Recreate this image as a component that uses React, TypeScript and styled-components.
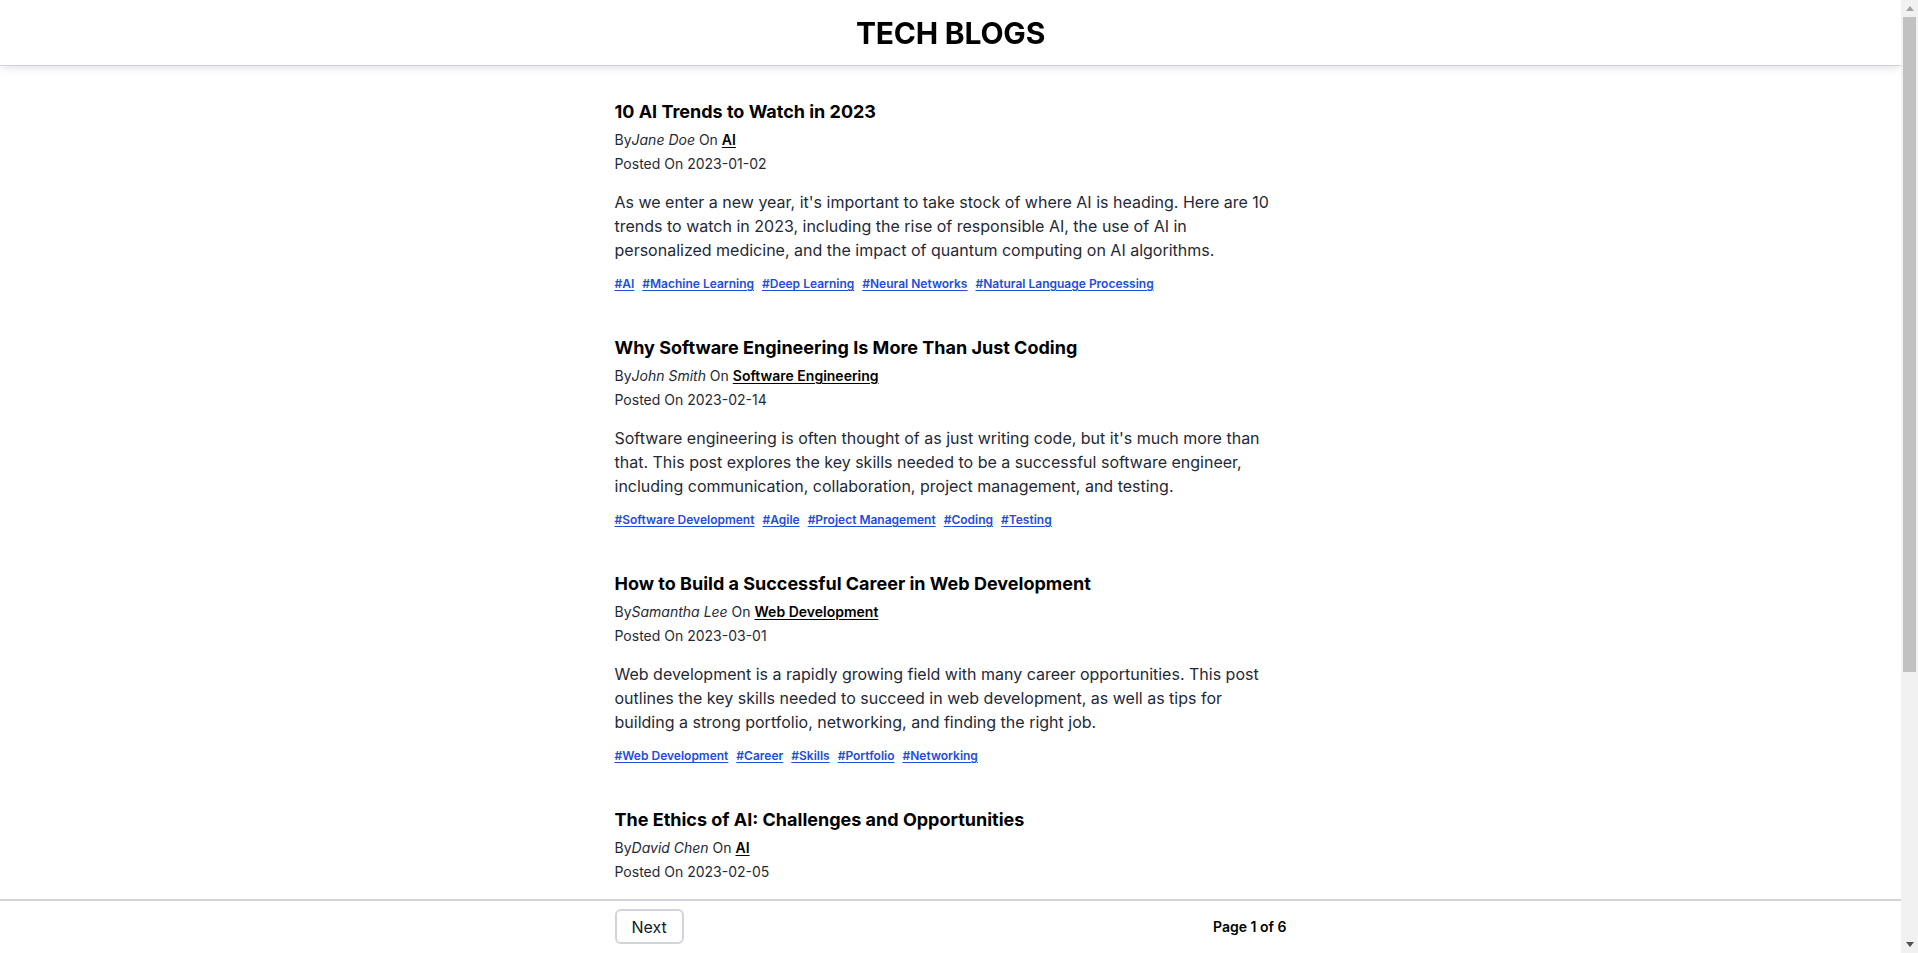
import React from "react";
import styled, { createGlobalStyle } from "styled-components";

const GlobalStyle = createGlobalStyle`
  html, body { margin: 0; padding: 0; background: #ffffff; overflow: hidden; }
  body {
    font-family: Inter, "Noto Sans", "Liberation Sans", sans-serif;
    color: #111827;
    -webkit-font-smoothing: antialiased;
  }
  * { box-sizing: border-box; }
`;

type Post = {
  title: string;
  author: string;
  category: string;
  date: string;
  body: string;
  tags: string[];
};

const posts: Post[] = [
  {
    title: "10 AI Trends to Watch in 2023",
    author: "Jane Doe",
    category: "AI",
    date: "2023-01-02",
    body:
      "As we enter a new year, it's important to take stock of where AI is heading. Here are 10 trends to watch in 2023, including the rise of responsible AI, the use of AI in personalized medicine, and the impact of quantum computing on AI algorithms.",
    tags: ["AI", "Machine Learning", "Deep Learning", "Neural Networks", "Natural Language Processing"],
  },
  {
    title: "Why Software Engineering Is More Than Just Coding",
    author: "John Smith",
    category: "Software Engineering",
    date: "2023-02-14",
    body:
      "Software engineering is often thought of as just writing code, but it's much more than that. This post explores the key skills needed to be a successful software engineer, including communication, collaboration, project management, and testing.",
    tags: ["Software Development", "Agile", "Project Management", "Coding", "Testing"],
  },
  {
    title: "How to Build a Successful Career in Web Development",
    author: "Samantha Lee",
    category: "Web Development",
    date: "2023-03-01",
    body:
      "Web development is a rapidly growing field with many career opportunities. This post outlines the key skills needed to succeed in web development, as well as tips for building a strong portfolio, networking, and finding the right job.",
    tags: ["Web Development", "Career", "Skills", "Portfolio", "Networking"],
  },
  {
    title: "The Ethics of AI: Challenges and Opportunities",
    author: "David Chen",
    category: "AI",
    date: "2023-02-05",
    body:
      "As AI becomes more powerful and pervasive, it raises important ethical questions. This post examines the challenges of bias, privacy, and accountability in AI systems, and the opportunities to build technology that benefits everyone.",
    tags: ["AI", "Ethics", "Bias", "Privacy", "Accountability"],
  },
  {
    title: "Getting Started with Cloud Computing",
    author: "Emily Brown",
    category: "Cloud",
    date: "2023-03-10",
    body:
      "Cloud computing has transformed the way organizations build and run software. This post introduces the core concepts of cloud computing, compares the major providers, and offers practical advice for migrating your first workloads.",
    tags: ["Cloud", "AWS", "Azure", "DevOps", "Infrastructure"],
  },
];

const Window = styled.div`
  height: 100vh;
  display: flex;
  flex-direction: row;
`;

const ScrollArea = styled.div`
  flex: 1;
  min-width: 0;
  height: 100%;
  overflow-y: auto;
  scrollbar-width: none;
  &::-webkit-scrollbar {
    display: none;
  }
`;

const ScrollBar = styled.div`
  width: 17px;
  flex: none;
  height: 100%;
  background: #f1f1f1;
  display: flex;
  flex-direction: column;
`;

const ScrollButton = styled.div`
  height: 17px;
  flex: none;
  display: flex;
  align-items: center;
  justify-content: center;
`;

const ScrollTrack = styled.div`
  flex: 1;
  display: flex;
  flex-direction: column;
  padding: 0 2px;
`;

const ScrollThumb = styled.div`
  height: 655px;
  background: #c1c1c1;
`;

const Header = styled.header`
  position: sticky;
  top: 0;
  z-index: 10;
  height: 66px;
  display: flex;
  align-items: center;
  justify-content: center;
  background: #ffffff;
  border-bottom: 1px solid #d1d5db;
  box-shadow: 0 4px 8px -2px rgba(0, 0, 0, 0.12);
`;

const SiteTitle = styled.h1`
  margin: 0;
  font-size: 30px;
  line-height: 36px;
  font-weight: 700;
  color: #000000;
  letter-spacing: -0.2px;
`;

const Main = styled.main`
  width: 672px;
  margin: 0 auto;
  padding: 32px 8px 40px 0;
  display: flex;
  flex-direction: column;
  gap: 40px;
`;

const Article = styled.article`
  display: flex;
  flex-direction: column;
`;

const PostTitle = styled.h2`
  margin: 0;
  font-size: 18px;
  line-height: 28px;
  font-weight: 700;
  color: #000000;
`;

const Meta = styled.p`
  margin: 4px 0 0;
  font-size: 14px;
  line-height: 20px;
  color: #1f2937;
`;

const Author = styled.em`
  font-style: italic;
`;

const Category = styled.a`
  font-weight: 600;
  color: #000000;
  text-decoration: underline;
  text-underline-offset: 2px;
`;

const Body = styled.p`
  margin: 16px 0 0;
  font-size: 16px;
  line-height: 24px;
  color: #1f2937;
`;

const Tags = styled.div`
  margin-top: 12px;
  display: flex;
  flex-wrap: wrap;
  gap: 8px;
  line-height: 20px;
`;

const Tag = styled.a`
  font-size: 12px;
  font-weight: 600;
  color: #1d4ed8;
  text-decoration: underline;
  text-underline-offset: 2px;
`;

const Footer = styled.footer`
  position: sticky;
  bottom: 0;
  z-index: 10;
  background: #ffffff;
  border-top: 2px solid #d1d5db;
  padding: 8px 0 9px;
`;

const FooterInner = styled.div`
  width: 672px;
  margin: 0 auto;
  display: flex;
  align-items: center;
  justify-content: space-between;
`;

const NavButton = styled.button`
  font-family: inherit;
  font-size: 16px;
  line-height: 24px;
  color: #111827;
  background: #ffffff;
  border: 2px solid #d1d5db;
  border-radius: 6px;
  padding: 3.5px 15px;
  cursor: pointer;
`;

const PageInfo = styled.span`
  font-size: 14px;
  font-weight: 600;
  color: #000000;
`;

function Arrow({ up, color }: { up: boolean; color: string }) {
  return (
    <svg width="8" height="5" viewBox="0 0 8 5">
      <polygon points={up ? "0,5 8,5 4,0" : "0,0 8,0 4,5"} fill={color} />
    </svg>
  );
}

export default function App() {
  return (
    <>
      <GlobalStyle />
      <Window>
        <ScrollArea>
          <Header>
            <SiteTitle>TECH BLOGS</SiteTitle>
          </Header>
          <Main>
            {posts.map((p) => (
              <Article key={p.title}>
                <PostTitle>{p.title}</PostTitle>
                <Meta>
                  By<Author>{p.author}</Author> On <Category href="#">{p.category}</Category>
                </Meta>
                <Meta>Posted On {p.date}</Meta>
                <Body>{p.body}</Body>
                <Tags>
                  {p.tags.map((t) => (
                    <Tag key={t} href="#">
                      #{t}
                    </Tag>
                  ))}
                </Tags>
              </Article>
            ))}
          </Main>
          <Footer>
            <FooterInner>
              <NavButton>Next</NavButton>
              <PageInfo>Page 1 of 6</PageInfo>
            </FooterInner>
          </Footer>
        </ScrollArea>
        <ScrollBar>
          <ScrollButton>
            <Arrow up color="#a3a3a3" />
          </ScrollButton>
          <ScrollTrack>
            <ScrollThumb />
          </ScrollTrack>
          <ScrollButton>
            <Arrow up={false} color="#505050" />
          </ScrollButton>
        </ScrollBar>
      </Window>
    </>
  );
}
